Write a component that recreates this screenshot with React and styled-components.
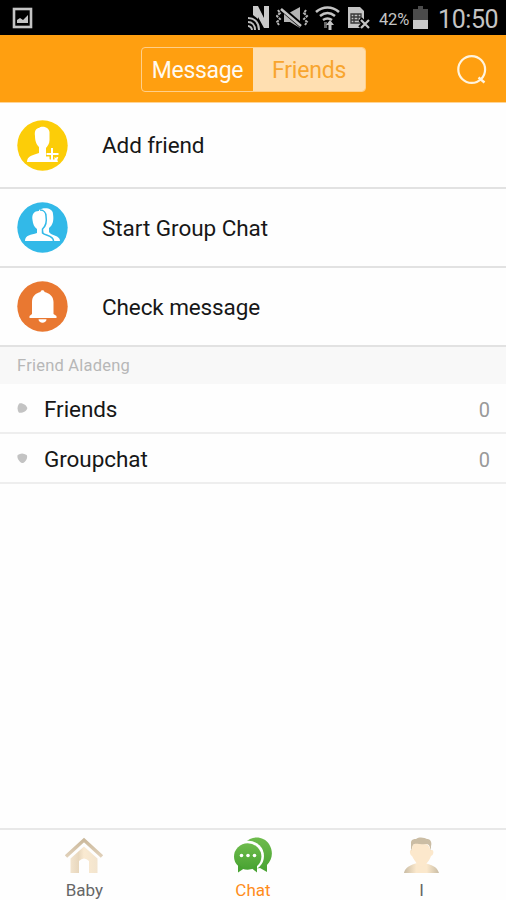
import React from 'react';
import styled, { createGlobalStyle } from 'styled-components';

const GlobalStyle = createGlobalStyle`
  * { box-sizing: border-box; }
  body { margin: 0; background: #fff; font-family: Roboto, sans-serif; }
`;

const Screen = styled.div`
  width: 506px;
  height: 900px;
  display: flex;
  flex-direction: column;
  background: #fefefe;
  overflow: hidden;
  white-space: nowrap;
`;

const StatusBar = styled.div`
  height: 35px;
  flex: none;
  display: flex;
  align-items: center;
  background: #000;
  padding: 0 8px 0 12px;
  color: #c4c4c4;
  svg { display: block; flex: none; }
`;

const StatusIcons = styled.div`
  display: flex;
  align-items: center;
  margin-left: auto;
`;

const MuteGap = styled.span`
  margin: 0 6px 0 5px;
`;

const SimGap = styled.span`
  margin-left: 7px;
`;

const Percent = styled.span`
  width: 31px;
  margin: 3px 3px 0 8px;
  font-size: 16.5px;
  letter-spacing: -0.2px;
`;

const Clock = styled.span`
  width: 60px;
  margin: 3px 0 0 10px;
  font-size: 25px;
  letter-spacing: -0.4px;
`;

const Header = styled.header`
  height: 68px;
  flex: none;
  display: flex;
  align-items: center;
  padding: 0 19px 0 141px;
  background: #ff9f10;
  border-bottom: 1px solid #ffd596;
`;

const Segments = styled.div`
  display: flex;
  width: 225px;
  height: 45px;
  margin-top: 1px;
  border: 1px solid #ffcf8a;
  border-radius: 4px;
  overflow: hidden;
`;

const Segment = styled.div`
  width: ${(p) => p.$width}px;
  display: flex;
  align-items: center;
  justify-content: center;
  padding-top: 2px;
  font-size: 23px;
  letter-spacing: ${(p) => p.$spacing}px;
  color: ${(p) => (p.$active ? '#f8a52e' : '#fffaf0')};
  background: ${(p) => (p.$active ? '#ffdfb1' : 'transparent')};
`;

const SearchButton = styled.div`
  margin: 2px 0 0 auto;
  svg { display: block; }
`;

const ActionRow = styled.div`
  height: ${(p) => p.$height}px;
  flex: none;
  display: flex;
  align-items: center;
  gap: 34px;
  padding: 0 17px;
  border-bottom: 2px solid #e2e2e2;
  font-size: 22.5px;
  letter-spacing: ${(p) => p.$spacing}px;
  color: #171717;
  svg { display: block; flex: none; }
`;

const SectionTitle = styled.div`
  height: 37px;
  flex: none;
  padding: 0 17px;
  line-height: 38px;
  background: #f8f8f8;
  color: #b7b7b7;
  font-size: 16.5px;
  letter-spacing: 0.22px;
`;

const GroupRow = styled.div`
  height: 50px;
  flex: none;
  display: flex;
  align-items: center;
  padding: 1px 16px 0 17px;
  border-bottom: 2px solid #eeeeee;
  svg { display: block; flex: none; }
`;

const GroupName = styled.span`
  margin-left: 16px;
  font-size: 22.5px;
  letter-spacing: -0.07px;
  color: #171717;
`;

const Count = styled.span`
  margin: 2px 0 0 auto;
  font-size: 20px;
  color: #999;
`;

const TabBar = styled.nav`
  height: 72px;
  flex: none;
  margin-top: auto;
  display: grid;
  grid-template-columns: repeat(3, 1fr);
  border-top: 2px solid #e8e8e8;
`;

const Tab = styled.div`
  display: flex;
  flex-direction: column;
  align-items: center;
  padding-top: 7px;
  font-size: 17px;
  line-height: 20px;
  color: ${(p) => (p.$active ? '#ff8c1a' : '#666')};
  svg { display: block; margin-bottom: 6px; }
`;

const PictureIcon = () => (
  <svg width="21" height="22" viewBox="0 0 21 22">
    <rect x="2" y="2" width="17" height="18" fill="none" stroke="#c4c4c4" strokeWidth="2.6" />
    <path d="M5 16V13l3-2 3 2 5-5v8z" fill="#c4c4c4" />
  </svg>
);

const NfcIcon = () => (
  <svg width="23" height="26" viewBox="0 0 23 26">
    <path d="M5 10V1h5l6 12V1h5v22h-5L10 12v2z" fill="#c9c9c9" />
    <g fill="none" stroke="#bdbdbd" strokeWidth="2">
      <path d="M0 13c7 0 11 5 11 12M0 17c4 0 7 3 7 8M0 21c2 0 4 2 4 4" />
    </g>
  </svg>
);

const MuteIcon = () => (
  <svg width="33" height="22" viewBox="0 0 33 22">
    <path d="M8 6h5l11-6v21l-10-6H8z" fill="#b5b5b5" />
    <path d="M5 1l22 19" stroke="#000" strokeWidth="5" />
    <path d="M5 2l20 17" stroke="#c4c4c4" strokeWidth="2.6" />
    <path d="M2 3l2 3-3 3 3 3-3 3 2 3M30 3l-2 3 3 3-3 3 3 3-2 3" fill="none" stroke="#b5b5b5" strokeWidth="2" strokeDasharray="2.5 1" />
  </svg>
);

const WifiIcon = () => (
  <svg width="25" height="26" viewBox="0 0 25 26">
    <g fill="none" stroke="#c4c4c4" strokeWidth="2.6">
      <path d="M1 7c7-6 16-6 23 0M5 11c5-4 10-4 15 0M8 15c3-2 6-2 9 0" />
    </g>
    <path d="M9 17h3v6h-3z" fill="#666" />
    <path d="M15 15l4 5h-2.5v5h-3v-5H11z" fill="#c4c4c4" />
  </svg>
);

const SimIcon = () => (
  <svg width="24" height="24" viewBox="0 0 24 24">
    <path d="M1 1h12l4 4v17H1z" fill="#c4c4c4" />
    <path d="M4 8h10v9H4zM4 11h10M4 14h7M7 8v9M11 8v6" fill="none" stroke="#383838" strokeWidth="1.3" />
    <path d="M13 13l9 9M22 13l-9 9" stroke="#000" strokeWidth="5" />
    <path d="M14 14l8 8M22 14l-8 8" stroke="#c4c4c4" strokeWidth="2.2" />
  </svg>
);

const BatteryIcon = () => (
  <svg width="15" height="23" viewBox="0 0 15 23">
    <path d="M5 0h5v3h5v20H0V3h5z" fill="#4b4b4b" />
    <path d="M0 14h15v9H0z" fill="#c9c9c9" />
  </svg>
);

const SearchIcon = () => (
  <svg width="31" height="31" viewBox="0 0 31 31">
    <circle cx="15.7" cy="15.5" r="13.4" fill="none" stroke="#fff4df" strokeWidth="2.2" />
    <path d="M22.500 23.500l6 5" stroke="#fff4df" strokeWidth="2.400" />
  </svg>
);

const AddFriendIcon = () => (
  <svg width="51" height="51" viewBox="0 0 51 51">
    <circle cx="25.5" cy="25.5" r="25.2" fill="#fccd08" />
    <path d="M18 16c-1-6 2-8 4-8 2-2.500 10-1.500 10.500 4v8c0 4-2 6-3.500 8v5c2 3 11 2 12 9H10c0-6 6-7 12-9v-6c-2-2-4-5-4-11z" fill="#fff" />
    <path d="M35 27.500v13M29 34h13" stroke="#fccd08" strokeWidth="5" />
    <path d="M35 28v12M29.500 34h12" stroke="#fff" strokeWidth="2" />
    <path d="M30.500 37l1.500 3.500h7l1.500-3.500" fill="none" stroke="#fff" strokeWidth="1.800" />
  </svg>
);

const GroupChatIcon = () => (
  <svg width="51" height="51" viewBox="0 0 51 51">
    <circle cx="25.5" cy="25.5" r="25.2" fill="#32b9e8" />
    <path d="M22 8c5-3 14-2 14 4 1 6 0 11-4 14v4c2 4 11 3 11 9H28z" fill="#fff" />
    <path d="M15.5 18c-1-6 2-9 6-9 5-1 8 2 8 7 0 5-1 8-4 11v4c2 3 11 2 12 8H8c0-6 6-6 12-8v-4c-3-2-4-5-4.500-9z" fill="#fff" />
    <path d="M23 8c4 0 6 3 6 6 1 6 0 10-3.500 13v4c3 3 11 2 11 8" fill="none" stroke="#32b9e8" strokeWidth="1.500" />
  </svg>
);

const BellIcon = () => (
  <svg width="51" height="51" viewBox="0 0 51 51">
    <circle cx="25.5" cy="25.5" r="25.2" fill="#e97831" />
    <path d="M15 33V21c0-6 4-9 8.500-10 0-2.500 4-2.500 4 0C32 12 36.500 15 36.500 21v12l3 2v2h-27v-2z" fill="#fff" />
    <path d="M21.500 38.300h8c0 4.500-8 4.500-8 0z" fill="#fff" />
  </svg>
);

const GroupMarker = ({ open }) => (
  <svg width="11" height="11" viewBox="0 0 11 11">
    {open ? (
      <path d="M.7 2q4.300-3 9 0c1.500 3-1 6.500-3.500 8-3 .5-7-5-5.500-8z" fill="#c3c3c3" />
    ) : (
      <path d="M2 .7c3-1.500 8 2 8.300 4.300 0 3-5.300 5.500-8.300 4.700q-3-4.500 0-9z" fill="#c3c3c3" />
    )}
  </svg>
);

const HomeIcon = () => (
  <svg width="40" height="37" viewBox="0 0 40 37">
    <defs>
      <linearGradient id="roof" x1="0" y1="0" x2="0" y2="1">
        <stop stopColor="#cbb99c" />
        <stop offset="1" stopColor="#e0d0b9" />
      </linearGradient>
      <linearGradient id="wall" x1="0" y1="0" x2="1" y2="0">
        <stop stopColor="#f2e4ce" />
        <stop offset="0.3" stopColor="#e8d7bd" />
        <stop offset="0.5" stopColor="#faead1" />
        <stop offset="1" stopColor="#f2e4ce" />
      </linearGradient>
    </defs>
    <path d="M2 19.500L20 3l18 16.500" fill="none" stroke="url(#roof)" strokeWidth="3.500" />
    <path d="M6.500 21.500L20 9.500l13.500 12V36H25V24q-5-5-10 0v12H6.500z" fill="url(#wall)" />
  </svg>
);

const ChatIcon = () => (
  <svg width="40" height="37" viewBox="0 0 40 37">
    <defs>
      <linearGradient id="bubble" x1="0" y1="0" x2="0" y2="1">
        <stop stopColor="#6ebb4c" />
        <stop offset="1" stopColor="#48a332" />
      </linearGradient>
    </defs>
    <path d="M12 6C18-2 31-1 36 7c5 8 3 16-2 21v7l-7-4C14 33 8 18 12 6z" fill="url(#bubble)" />
    <ellipse cx="15.5" cy="19" rx="15.5" ry="15.2" fill="#fff" />
    <ellipse cx="14.7" cy="19.5" rx="13.7" ry="13.2" fill="url(#bubble)" />
    <path d="M5 27v8.500l6-4M19 31.500l5 4v-8z" fill="#48a332" />
    <g fill="#fff">
      <circle cx="8.500" cy="18.500" r="1.800" />
      <circle cx="15" cy="18.500" r="1.800" />
      <circle cx="21.500" cy="18.500" r="1.800" />
    </g>
  </svg>
);

const PersonIcon = () => (
  <svg width="40" height="37" viewBox="0 0 40 37">
    <defs>
      <linearGradient id="shirt">
        <stop stopColor="#c9bca4" />
        <stop offset="0.35" stopColor="#fbe8cc" />
        <stop offset="0.65" stopColor="#fbe8cc" />
        <stop offset="1" stopColor="#c9bca4" />
      </linearGradient>
    </defs>
    <path d="M2 36c1-6 7-8 13-10h8c6 2 12 3 14 10z" fill="url(#shirt)" />
    <path d="M9 13c-2 0-1 5 1 6 2 4 4 6 5 8l4.500 3 4.500-3c2-2 4-5 5-8 3-1 3-6 1-6z" fill="#fce8cc" />
    <path d="M9 14V5c1-3 3-3 5-3 4-3 9-1 11 0 4 0 5 4 4 7v5c-2-8-3-7-8-6-5 0-8-2-10 0z" fill="#cbbda4" />
    <path d="M10 14c0-7 2-8 7-7 6 1 10-2 11.500 7v5H10z" fill="#fce8cc" />
  </svg>
);

export default function App() {
  return (
    <>
      <GlobalStyle />
      <Screen>
        <StatusBar>
          <PictureIcon />
          <StatusIcons>
            <NfcIcon />
            <MuteGap><MuteIcon /></MuteGap>
            <WifiIcon />
            <SimGap><SimIcon /></SimGap>
            <Percent>42%</Percent>
            <BatteryIcon />
            <Clock>10:50</Clock>
          </StatusIcons>
        </StatusBar>
        <Header>
          <Segments>
            <Segment $width={111} $spacing={-0.3}>Message</Segment>
            <Segment $width={112} $spacing={-0.2} $active>Friends</Segment>
          </Segments>
          <SearchButton><SearchIcon /></SearchButton>
        </Header>
        <ActionRow $height={86} $spacing={-0.12}><AddFriendIcon />Add friend</ActionRow>
        <ActionRow $height={79} $spacing={-0.05}><GroupChatIcon />Start Group Chat</ActionRow>
        <ActionRow $height={79} $spacing={-0.1}><BellIcon />Check message</ActionRow>
        <SectionTitle>Friend Aladeng</SectionTitle>
        <GroupRow><GroupMarker /><GroupName>Friends</GroupName><Count>0</Count></GroupRow>
        <GroupRow><GroupMarker open /><GroupName>Groupchat</GroupName><Count>0</Count></GroupRow>
        <TabBar>
          <Tab><HomeIcon />Baby</Tab>
          <Tab $active><ChatIcon />Chat</Tab>
          <Tab><PersonIcon />I</Tab>
        </TabBar>
      </Screen>
    </>
  );
}
